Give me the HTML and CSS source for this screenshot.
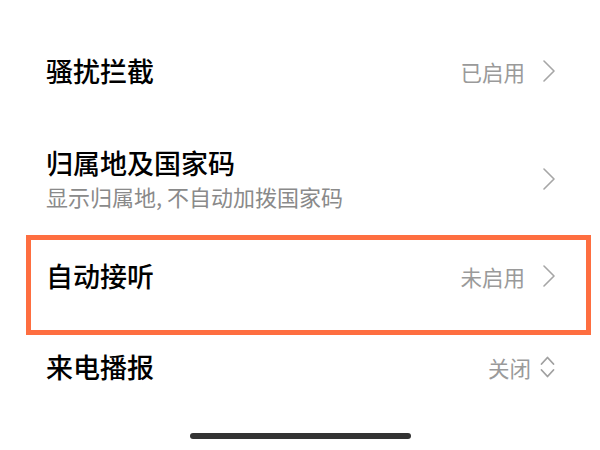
FILE: index.html
```html
<!DOCTYPE html>
<html lang="zh-CN">
<head>
    <meta charset="UTF-8">
    <meta name="viewport" content="width=device-width, initial-scale=1.0">
    <title>通话设置</title>
    <link rel="stylesheet" href="styles.css">
</head>
<body>
    <div class="settings">
        <div class="row row-first">
            <div class="row-text">
                <div class="row-title">骚扰拦截</div>
            </div>
            <div class="row-value">已启用</div>
            <svg class="chevron" width="12" height="22" viewBox="0 0 12 22">
                <polyline points="1,1 11,11 1,21" />
            </svg>
        </div>

        <div class="row row-double">
            <div class="row-text">
                <div class="row-title">归属地及国家码</div>
                <div class="row-sub">显示归属地, 不自动加拨国家码</div>
            </div>
            <svg class="chevron" width="12" height="22" viewBox="0 0 12 22">
                <polyline points="1,1 11,11 1,21" />
            </svg>
        </div>

        <div class="row row-marked">
            <div class="row-text">
                <div class="row-title">自动接听</div>
            </div>
            <div class="row-value">未启用</div>
            <svg class="chevron" width="12" height="22" viewBox="0 0 12 22">
                <polyline points="1,1 11,11 1,21" />
            </svg>
            <div class="highlight"></div>
        </div>

        <div class="row row-last">
            <div class="row-text">
                <div class="row-title">来电播报</div>
            </div>
            <div class="row-value">关闭</div>
            <svg class="updown" width="15" height="24" viewBox="0 0 15 24">
                <polyline points="1.5,9 7.5,2.5 13.5,9" />
                <polyline points="1.5,15 7.5,21.5 13.5,15" />
            </svg>
        </div>
    </div>

    <div class="home-bar"></div>
</body>
</html>
```

FILE: styles.css
```css
* {
    margin: 0;
    padding: 0;
    box-sizing: border-box;
}

body {
    font-family: "Noto Sans CJK SC", "Noto Sans", sans-serif;
    background: #ffffff;
    width: 600px;
    height: 450px;
    overflow: hidden;
}

.settings {
    display: flex;
    flex-direction: column;
    padding-top: 20px;
}

.row {
    display: flex;
    align-items: center;
    padding: 0 45px 0 46px;
}

.row-first {
    height: 102px;
}

.row-double {
    height: 113px;
}

.row-marked {
    position: relative;
    height: 102px;
    padding-bottom: 20px;
}

.row-last {
    height: 60px;
}

.row-text {
    flex: 1;
}

.row-title {
    font-size: 27px;
    line-height: 34px;
    font-weight: 500;
    color: #000000;
}

.row-sub {
    font-size: 22px;
    line-height: 32px;
    color: #8a8a8a;
}

.row-value {
    font-size: 21.5px;
    color: #9a9a9a;
}

.chevron {
    margin-left: 18px;
    fill: none;
    stroke: #a6a6a6;
    stroke-width: 1.6;
    stroke-linecap: round;
    stroke-linejoin: round;
}

.updown {
    margin-left: 9px;
    fill: none;
    stroke: #a0a0a0;
    stroke-width: 1.8;
    stroke-linecap: round;
    stroke-linejoin: round;
}

.highlight {
    position: absolute;
    left: 26px;
    top: 0;
    width: 565px;
    height: 100px;
    border: 5px solid #fe6e40;
}

.home-bar {
    width: 221px;
    height: 6px;
    margin: 36px auto 0;
    border-radius: 3px;
    background: #333333;
}
```
